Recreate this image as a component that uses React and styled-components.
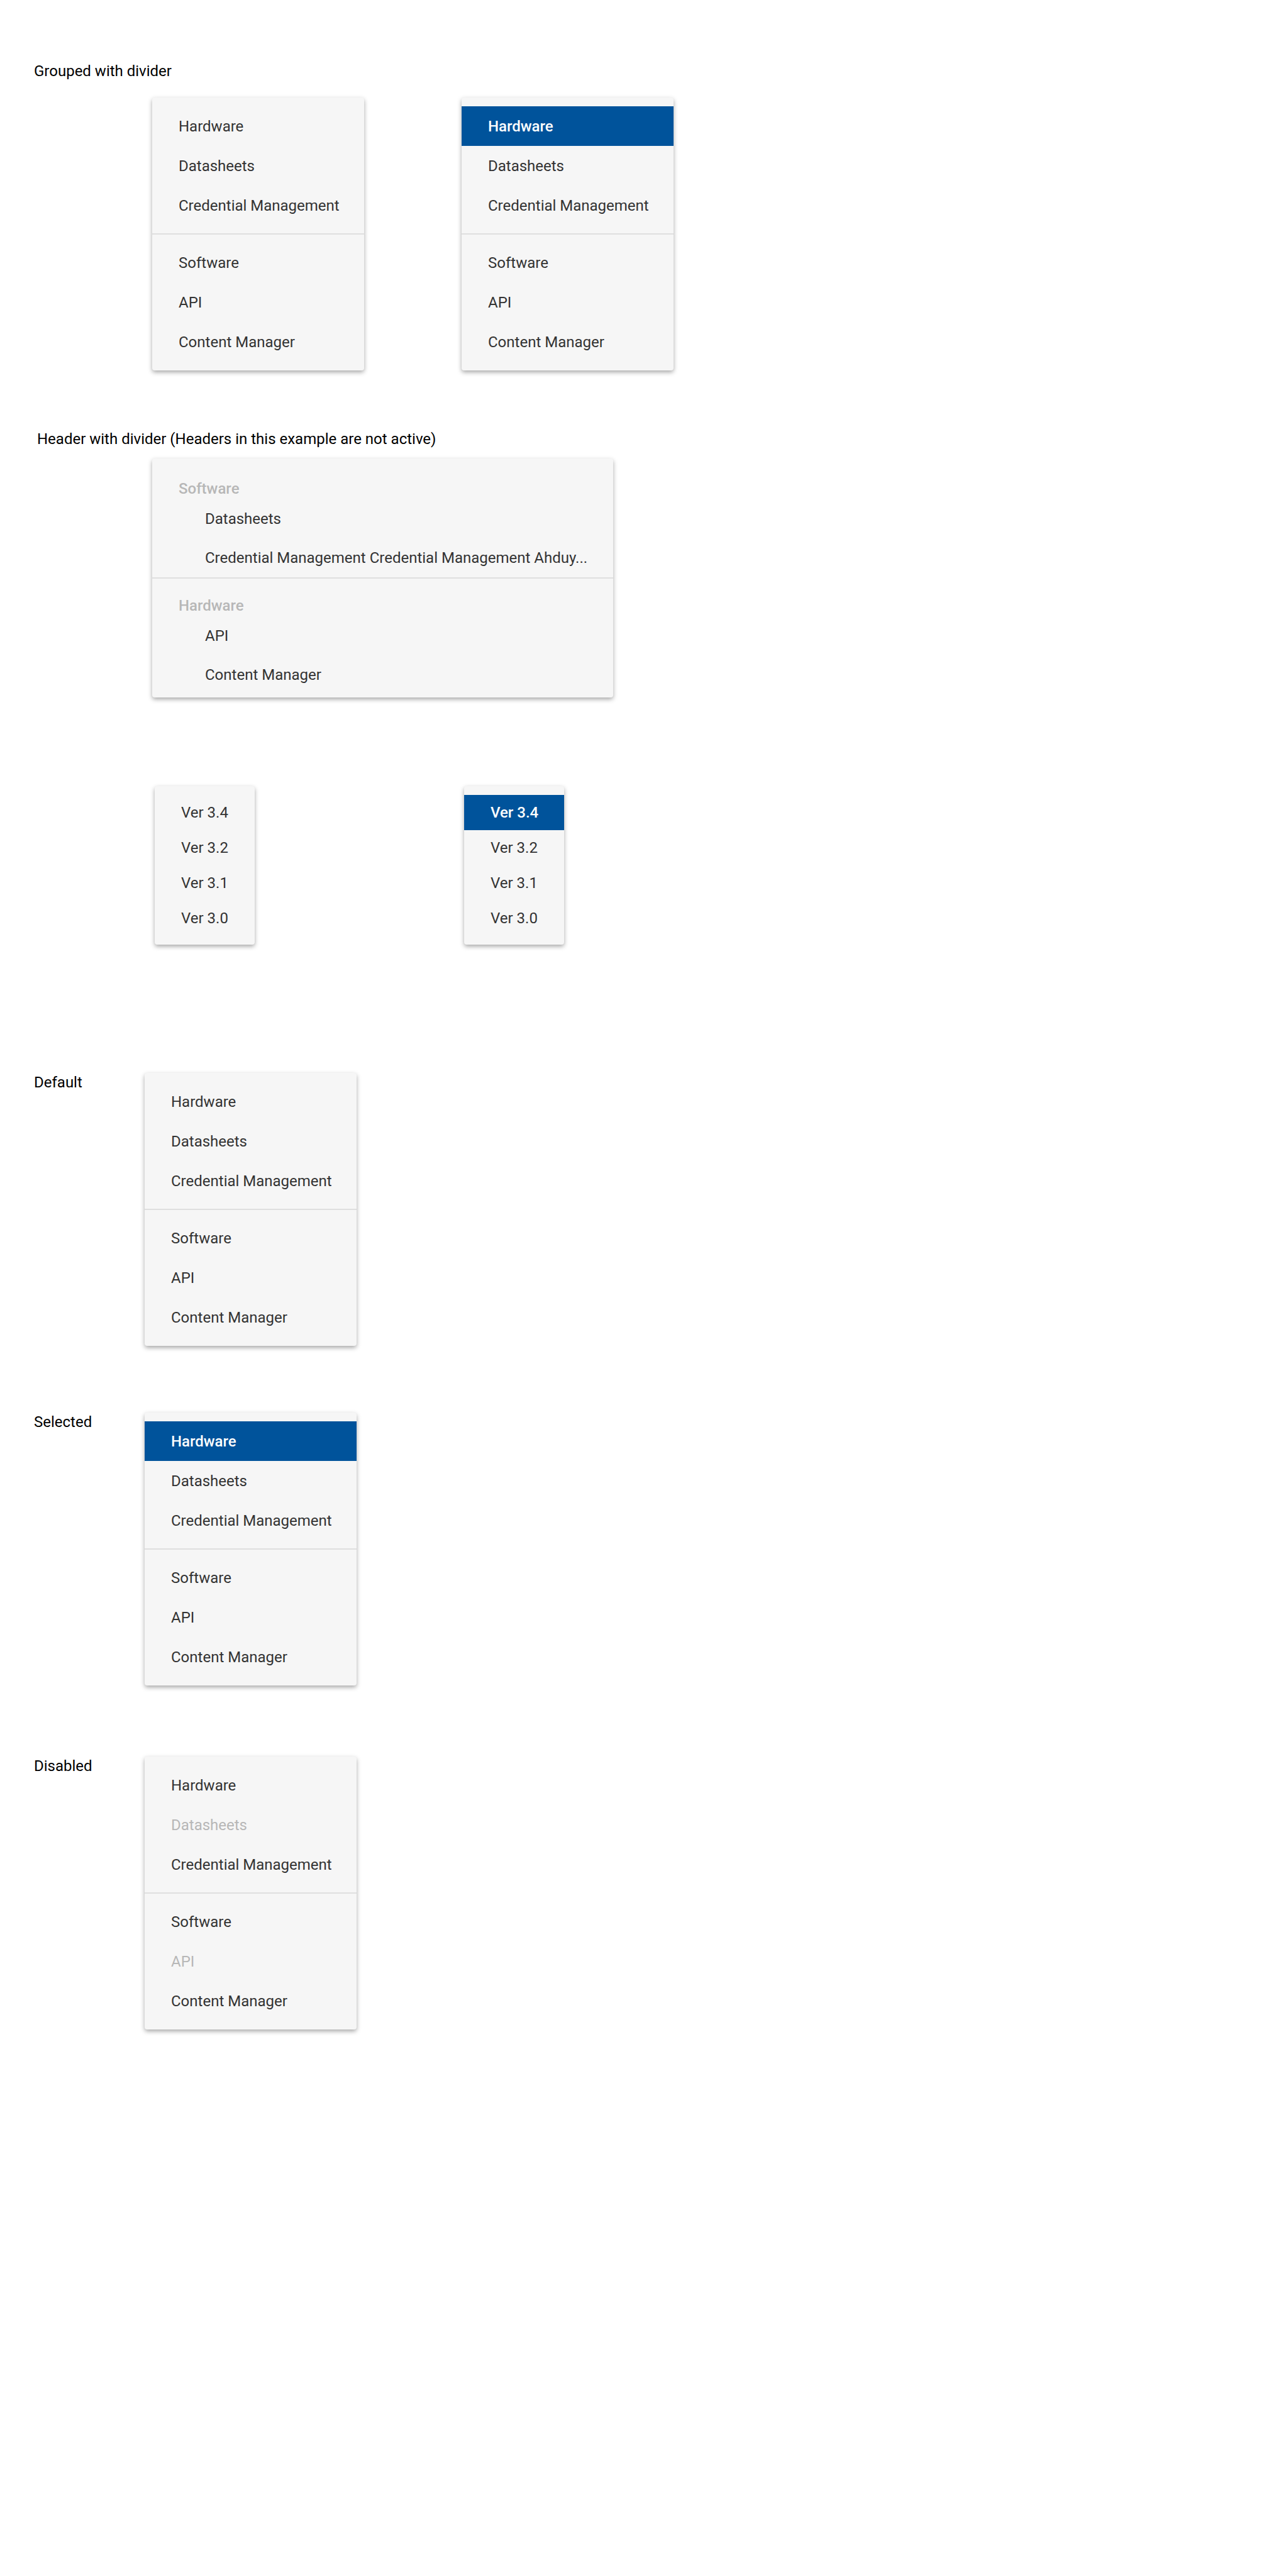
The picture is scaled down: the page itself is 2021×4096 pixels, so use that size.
import React from "react";
import styled, { createGlobalStyle } from "styled-components";

const GlobalStyle = createGlobalStyle`
  *, *::before, *::after { box-sizing: border-box; }
  body {
    margin: 0;
    background: #fff;
    font-family: Roboto, "Liberation Sans", sans-serif;
    font-size: 24px;
    line-height: 28px;
  }
`;

const Page = styled.main`
  display: flex;
  flex-direction: column;
  min-height: 100vh;
  padding: 99px 54px;
`;

const Section = styled.section`
  display: flex;
  flex-direction: column;
  gap: ${(p) => p.$gap || 28}px;
  margin-top: ${(p) => p.$space || 0}px;
  padding-left: ${(p) => p.$inset || 0}px;
`;

const Title = styled.h2`
  margin: 0;
  color: #000;
  font-size: 24px;
  font-weight: 400;
  line-height: 28px;
`;

const MenuRow = styled.div`
  display: grid;
  grid-template-columns: 492px max-content;
  align-items: start;
  padding-left: ${(p) => p.$indent}px;
`;

const StateRow = styled.section`
  display: grid;
  grid-template-columns: 176px max-content;
  align-items: start;
  margin-top: ${(p) => p.$space}px;
`;

const StateTitle = styled(Title)`
  padding-top: 1px;
`;

const MenuCard = styled.div`
  width: ${(p) => p.$width}px;
  padding: ${(p) => p.$pad}px 0;
  border-radius: 4px;
  background: #f6f6f6;
  box-shadow: 0 3px 7px rgba(0, 0, 0, 0.35);
`;

const List = styled.ul`
  margin: 0;
  padding: 0;
  list-style: none;
`;

const Item = styled.button`
  display: block;
  width: 100%;
  height: ${(p) => p.$height}px;
  padding: 0 0 0 ${(p) => (p.$nested ? 84 : 42)}px;
  border: 0;
  background: ${(p) => (p.$selected ? "#00539b" : "transparent")};
  color: ${(p) => (p.$selected ? "#fff" : "#333")};
  font: inherit;
  font-weight: ${(p) => (p.$selected ? 500 : 400)};
  text-align: left;
  white-space: nowrap;
  cursor: pointer;

  &:disabled {
    color: #b7b7b7;
    cursor: default;
  }
`;

const Divider = styled.hr`
  height: 2px;
  margin: ${(p) => p.$gap}px 0;
  border: 0;
  background: #dfdfdf;
`;

const GroupHeader = styled.h3`
  margin: 0;
  padding: 26px 42px 0;
  color: #b7b7b7;
  font-size: 24px;
  font-weight: 500;
  line-height: 34px;
`;

const productGroups = [
  { items: ["Hardware", "Datasheets", "Credential Management"] },
  { items: ["Software", "API", "Content Manager"] },
];

const headedGroups = [
  {
    header: "Software",
    items: ["Datasheets", "Credential Management Credential Management Ahduy..."],
  },
  { header: "Hardware", items: ["API", "Content Manager"] },
];

const versionGroups = [{ items: ["Ver 3.4", "Ver 3.2", "Ver 3.1", "Ver 3.0"] }];

function Menu({
  groups,
  selected,
  disabled = [],
  width = 337,
  pad = 14,
  itemHeight = 63,
  dividerGap = 13,
}) {
  return (
    <MenuCard $width={width} $pad={pad}>
      {groups.map((group, i) => (
        <React.Fragment key={i}>
          {i > 0 && <Divider $gap={dividerGap} />}
          {group.header && <GroupHeader>{group.header}</GroupHeader>}
          <List>
            {group.items.map((label) => (
              <li key={label}>
                <Item
                  type="button"
                  $height={itemHeight}
                  $nested={Boolean(group.header)}
                  $selected={label === selected}
                  disabled={disabled.includes(label)}
                >
                  {label}
                </Item>
              </li>
            ))}
          </List>
        </React.Fragment>
      ))}
    </MenuCard>
  );
}

export default function App() {
  return (
    <>
      <GlobalStyle />
      <Page>
        <Section>
          <Title>Grouped with divider</Title>
          <MenuRow $indent={188}>
            <Menu groups={productGroups} />
            <Menu groups={productGroups} selected="Hardware" />
          </MenuRow>
        </Section>

        <Section $gap={17} $space={95} $inset={5}>
          <Title>Header with divider (Headers in this example are not active)</Title>
          <MenuRow $indent={183}>
            <Menu groups={headedGroups} width={733} pad={5} itemHeight={62} dividerGap={0} />
          </MenuRow>
        </Section>

        <Section $space={141}>
          <MenuRow $indent={192}>
            <Menu groups={versionGroups} width={159} itemHeight={56} />
            <Menu groups={versionGroups} width={159} itemHeight={56} selected="Ver 3.4" />
          </MenuRow>
        </Section>

        <StateRow $space={204}>
          <StateTitle>Default</StateTitle>
          <Menu groups={productGroups} />
        </StateRow>
        <StateRow $space={106}>
          <StateTitle>Selected</StateTitle>
          <Menu groups={productGroups} selected="Hardware" />
        </StateRow>
        <StateRow $space={113}>
          <StateTitle>Disabled</StateTitle>
          <Menu groups={productGroups} disabled={["Datasheets", "API"]} />
        </StateRow>
      </Page>
    </>
  );
}
